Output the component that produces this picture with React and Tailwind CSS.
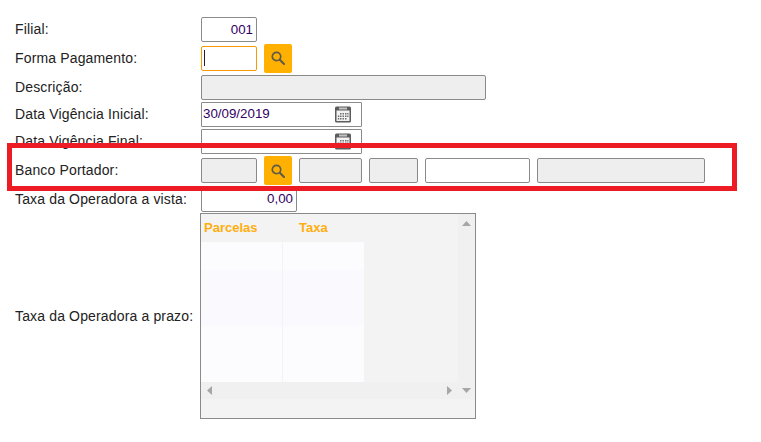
import React from "react";

const inputBase = "h-[25px] rounded-[2px] border border-[#8a8a8a] px-px text-[13.33px] tracking-normal text-[#330066] outline-none";
const disabled = "bg-[#eeeeee]";

const SearchIcon = () => (
  <svg width="16" height="16" viewBox="0 0 16 16" fill="none">
    <circle cx="6.5" cy="6.5" r="4.2" stroke="#5f5a4a" strokeWidth="1.7" />
    <path d="M9.8 9.8 L14 14" stroke="#5f5a4a" strokeWidth="2.1" strokeLinecap="round" />
  </svg>
);

const SearchButton = () => (
  <div className="ml-[7px] flex h-[29px] w-[28px] items-center justify-center rounded-[2px] bg-[#ffb000]">
    <SearchIcon />
  </div>
);

const CalendarIcon = () => (
  <svg width="16" height="17" viewBox="0 0 16 17">
    <rect x="0" y="0.5" width="16" height="16" rx="1.5" fill="#5c5c5c" />
    <rect x="4" y="1.5" width="8" height="2" fill="#c4c4c4" />
    <rect x="1.5" y="4.5" width="13" height="10.5" fill="#f2f2f2" />
    <path d="M5 7h1.5v1.5H5zM7.5 7H9v1.5H7.5zM10 7h1.5v1.5H10zM12.2 7h1.3v1.5h-1.3zM2.8 9.5h1.5V11H2.8zM5 9.5h1.5V11H5zM7.5 9.5H9V11H7.5zM10 9.5h1.5V11H10zM12.2 9.5h1.3V11h-1.3zM2.8 12h1.5v1.5H2.8zM5 12h1.5v1.5H5zM7.5 12H9v1.5H7.5zM10 12h1.5v1.5H10z" fill="#6e6e6e" />
  </svg>
);

const DateInput = ({ value }) => (
  <div className="flex h-[25px] w-[161px] items-center justify-between rounded-[1px] border border-[#8a8a8a] pr-[10px] pl-px text-[13.33px] tracking-normal text-[#330066]">
    <span>{value}</span>
    <CalendarIcon />
  </div>
);

const Row = ({ label, height, children }) => (
  <div className="flex items-center" style={{ height }}>
    <div className="w-[186px] shrink-0">{label}</div>
    {children}
  </div>
);

const Arrow = ({ dir }) => {
  const points = {
    up: "0,5 4.5,0 9,5",
    down: "0,0 9,0 4.5,5",
    left: "5,0 5,9 0,4.5",
    right: "0,0 0,9 5,4.5",
  };
  const size = dir === "up" || dir === "down" ? { width: 9, height: 5 } : { width: 5, height: 9 };
  return (
    <svg {...size}>
      <polygon points={points[dir]} fill="#a6a6a6" />
    </svg>
  );
};

const GridColumn = () => (
  <div className="flex w-[81px] flex-col">
    <div className="h-[28px] bg-[#fcfcff]" />
    <div className="h-[56px] bg-[#f9f9fe]" />
    <div className="h-[56px] bg-[#fcfcff]" />
  </div>
);

const Grid = () => (
  <div className="flex h-[206px] w-[276px] shrink-0 flex-col border border-[#8a8a8a] bg-[#f3f3f3]">
    <div className="flex h-[168px]">
      <div className="flex w-[257px] flex-col">
        <div className="flex h-[28px] items-center text-[13px] font-bold tracking-normal text-[#ffae0d]">
          <span className="w-[98px] pl-[3px]">Parcelas</span>
          <span>Taxa</span>
        </div>
        <div className="flex gap-px">
          <GridColumn />
          <GridColumn />
        </div>
      </div>
      <div className="flex w-[17px] items-start justify-center bg-[#f0f0f0] pt-[7px]">
        <Arrow dir="up" />
      </div>
    </div>
    <div className="flex h-[17px] bg-[#f0f0f0]">
      <div className="flex w-[257px] items-center justify-between px-[6px]">
        <Arrow dir="left" />
        <Arrow dir="right" />
      </div>
      <div className="flex w-[17px] items-center justify-center">
        <Arrow dir="down" />
      </div>
    </div>
  </div>
);

export default function App() {
  return (
    <div className="relative h-[442px] w-[761px] overflow-hidden bg-white pt-4 pl-[15px] font-['Liberation_Sans',Arial,sans-serif] text-[14px] tracking-[0.15px] text-[#222222]">
      <Row label="Filial:" height={27}>
        <div className={`${inputBase} flex w-[56px] items-center justify-end pr-[3px]`}>001</div>
      </Row>
      <Row label="Forma Pagamento:" height={30}>
        <div className="flex h-[25px] w-[56px] items-center rounded-[2px] border border-[#f59a00] pl-[2px]">
          <div className="h-[16px] w-px bg-[#222222]" />
        </div>
        <SearchButton />
      </Row>
      <Row label="Descrição:" height={28}>
        <div className={`${inputBase} ${disabled} w-[285px]`} />
      </Row>
      <Row label="Data Vigência Inicial:" height={26}>
        <DateInput value="30/09/2019" />
      </Row>
      <Row label="Data Vigência Final:" height={29}>
        <DateInput value="" />
      </Row>
      <Row label="Banco Portador:" height={29}>
        <div className={`${inputBase} ${disabled} w-[56px]`} />
        <SearchButton />
        <div className={`${inputBase} ${disabled} ml-[7px] w-[63px]`} />
        <div className={`${inputBase} ${disabled} ml-[7px] w-[49px]`} />
        <div className={`${inputBase} ml-[7px] w-[105px] bg-white`} />
        <div className={`${inputBase} ${disabled} ml-[7px] w-[168px]`} />
      </Row>
      <Row label="Taxa da Operadora a vista:" height={28}>
        <div className={`${inputBase} flex w-[96px] items-center justify-end pr-[3px]`}>0,00</div>
      </Row>
      <div className="flex items-center">
        <div className="w-[185px] shrink-0">Taxa da Operadora a prazo:</div>
        <Grid />
      </div>
      <div className="absolute top-[143px] left-[7px] h-[48px] w-[730px] border-[5px] border-[#ed1c24]" />
    </div>
  );
}
